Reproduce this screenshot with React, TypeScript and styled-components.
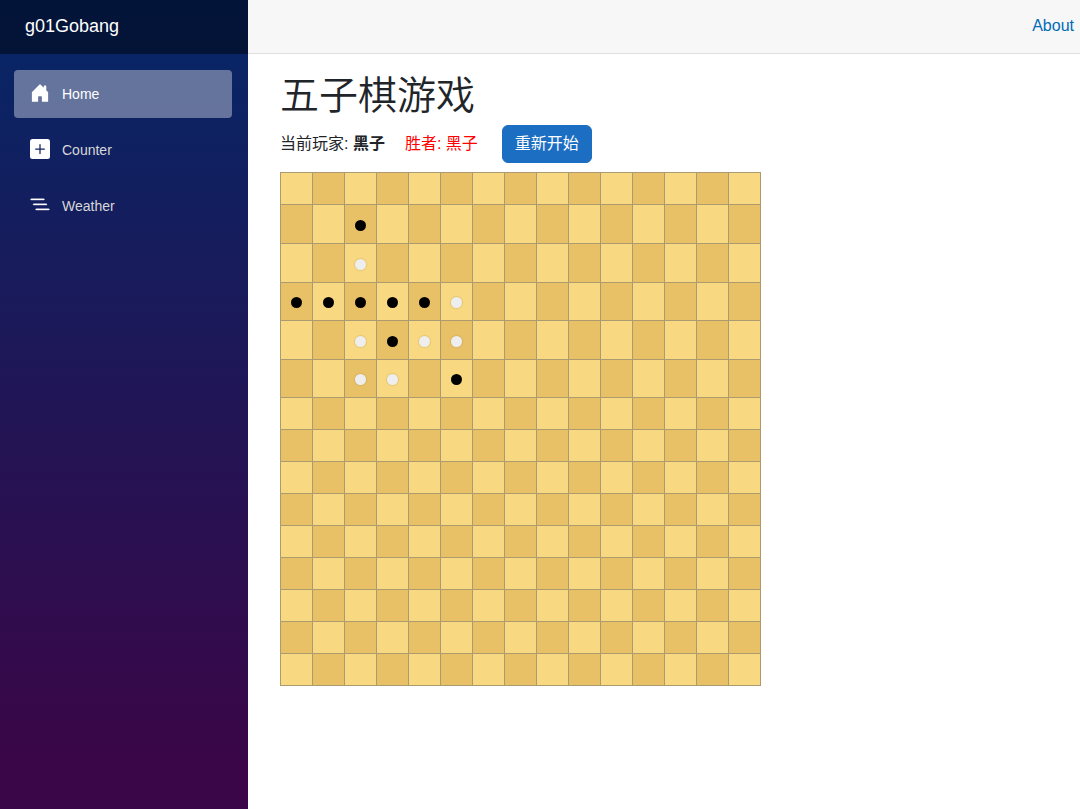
import React, { useState } from "react";
import styled, { createGlobalStyle } from "styled-components";
import { BsHouseDoorFill, BsListNested, BsPlusSquareFill } from "react-icons/bs";

const GlobalStyle = createGlobalStyle`
  *, *::before, *::after { box-sizing: border-box; }
  body {
    margin: 0;
    background: #fff;
    color: #212529;
    font-family: "Liberation Sans", "Noto Sans CJK SC", sans-serif;
    font-size: 16px;
    line-height: 24px;
  }
`;

const Page = styled.div`
  display: flex;
  min-height: 100vh;
`;

const Sidebar = styled.aside`
  flex: 0 0 248px;
  background: linear-gradient(180deg, rgb(5, 39, 103) 0%, #3a0647 94%);
`;

const BrandRow = styled.div`
  display: flex;
  align-items: center;
  height: 54px;
  padding: 0 25px 2px;
  background: rgba(0, 0, 0, 0.45);
`;

const Brand = styled.a`
  color: #fff;
  font-size: 18px;
  text-decoration: none;
`;

const Nav = styled.nav`
  display: flex;
  flex-direction: column;
  gap: 8px;
  padding: 16px 16px 16px 14px;
`;

const NavLink = styled.a<{ $active?: boolean }>`
  display: flex;
  align-items: center;
  gap: 12px;
  height: 48px;
  padding: 0 16px;
  border-radius: 4px;
  background: ${(p) => (p.$active ? "rgba(255, 255, 255, 0.37)" : "transparent")};
  color: ${(p) => (p.$active ? "#fff" : "#d7d7d7")};
  font-size: 14px;
  text-decoration: none;
`;

const NavIcon = styled.span<{ $line?: boolean }>`
  display: flex;
  padding-bottom: 2px;
  color: #fff;
  font-size: 20px;

  svg {
    stroke-width: ${(p) => (p.$line ? "0.3px" : "0")};
  }
`;

const Main = styled.main`
  flex: 1;
  min-width: 0;
`;

const TopBar = styled.header`
  display: flex;
  align-items: center;
  justify-content: flex-end;
  height: 54px;
  padding: 0 6px 2px;
  border-bottom: 1px solid #dfdfdf;
  background: #f7f7f7;
`;

const AboutLink = styled.a`
  color: #006bb7;
  text-decoration: none;
`;

const Content = styled.article`
  padding: 18px 32px;
`;

const Title = styled.h1`
  margin: 0 0 6px;
  font-size: 39px;
  font-weight: 350;
  line-height: 47px;
`;

const StatusBar = styled.div`
  display: flex;
  align-items: center;
  margin-bottom: 9px;
`;

const Winner = styled.span`
  margin: 0 24px 0 20px;
  color: #f00;
`;

const RestartButton = styled.button`
  height: 38px;
  padding: 0 12px;
  border: 1px solid #1b6ec2;
  border-radius: 6px;
  background: #1b6ec2;
  color: #fff;
  font: inherit;
  cursor: pointer;
`;

const Board = styled.table`
  width: 481px;
  border-collapse: collapse;
  table-layout: fixed;
`;

const BoardRow = styled.tr<{ $height: number }>`
  height: ${(p) => p.$height}px;
`;

const Cell = styled.td<{ $dark: boolean }>`
  height: inherit;
  padding: 0;
  border: 1px solid #ac9a70;
  background: ${(p) => (p.$dark ? "#e8c066" : "#f8d880")};
`;

const CellButton = styled.button`
  display: flex;
  align-items: center;
  justify-content: center;
  width: 100%;
  height: 24px;
  padding: 0;
  border: 0;
  background: transparent;
  cursor: pointer;
`;

const Stone = styled.span<{ $color: "B" | "W" }>`
  width: 11px;
  height: 11px;
  margin-top: 2px;
  border-radius: 50%;
  background: ${(p) => (p.$color === "B" ? "#000" : "#eee")};
  box-shadow: ${(p) => (p.$color === "B" ? "none" : "0 0 1px 1px rgba(150, 130, 90, 0.2)")};
`;

const SIZE = 15;
const ROW_HEIGHTS = [32, 39, 39, 38, 39, 38];
const PLAYED = [
  "",
  "..B",
  "..W",
  "BBBBBW",
  "..WBWW",
  "..WW.B",
];
const LINES = Array.from({ length: SIZE }, (_, i) => i);

const links = [
  { label: "Home", Icon: BsHouseDoorFill, active: true },
  { label: "Counter", Icon: BsPlusSquareFill },
  { label: "Weather", Icon: BsListNested, line: true },
];

export default function App() {
  const [rows, setRows] = useState<string[]>(PLAYED);
  const started = rows.length > 0;

  return (
    <>
      <GlobalStyle />
      <Page>
        <Sidebar>
          <BrandRow>
            <Brand href="#">g01Gobang</Brand>
          </BrandRow>
          <Nav>
            {links.map(({ label, Icon, active, line }) => (
              <NavLink key={label} href={`#${label.toLowerCase()}`} $active={active}>
                <NavIcon $line={line}>
                  <Icon aria-hidden />
                </NavIcon>
                {label}
              </NavLink>
            ))}
          </Nav>
        </Sidebar>
        <Main>
          <TopBar>
            <AboutLink href="#about">About</AboutLink>
          </TopBar>
          <Content>
            <Title>五子棋游戏</Title>
            <StatusBar>
              <span>
                当前玩家: <strong>黑子</strong>
              </span>
              <Winner>{started ? "胜者: 黑子" : ""}</Winner>
              <RestartButton type="button" onClick={() => setRows([])}>
                重新开始
              </RestartButton>
            </StatusBar>
            <Board>
              <tbody>
                {LINES.map((y) => (
                  <BoardRow key={y} $height={(started && ROW_HEIGHTS[y]) || 32}>
                    {LINES.map((x) => {
                      const stone = rows[y]?.[x];
                      return (
                        <Cell key={x} $dark={(x + y) % 2 === 1}>
                          <CellButton type="button" disabled={started}>
                            {(stone === "B" || stone === "W") && <Stone $color={stone} />}
                          </CellButton>
                        </Cell>
                      );
                    })}
                  </BoardRow>
                ))}
              </tbody>
            </Board>
          </Content>
        </Main>
      </Page>
    </>
  );
}
